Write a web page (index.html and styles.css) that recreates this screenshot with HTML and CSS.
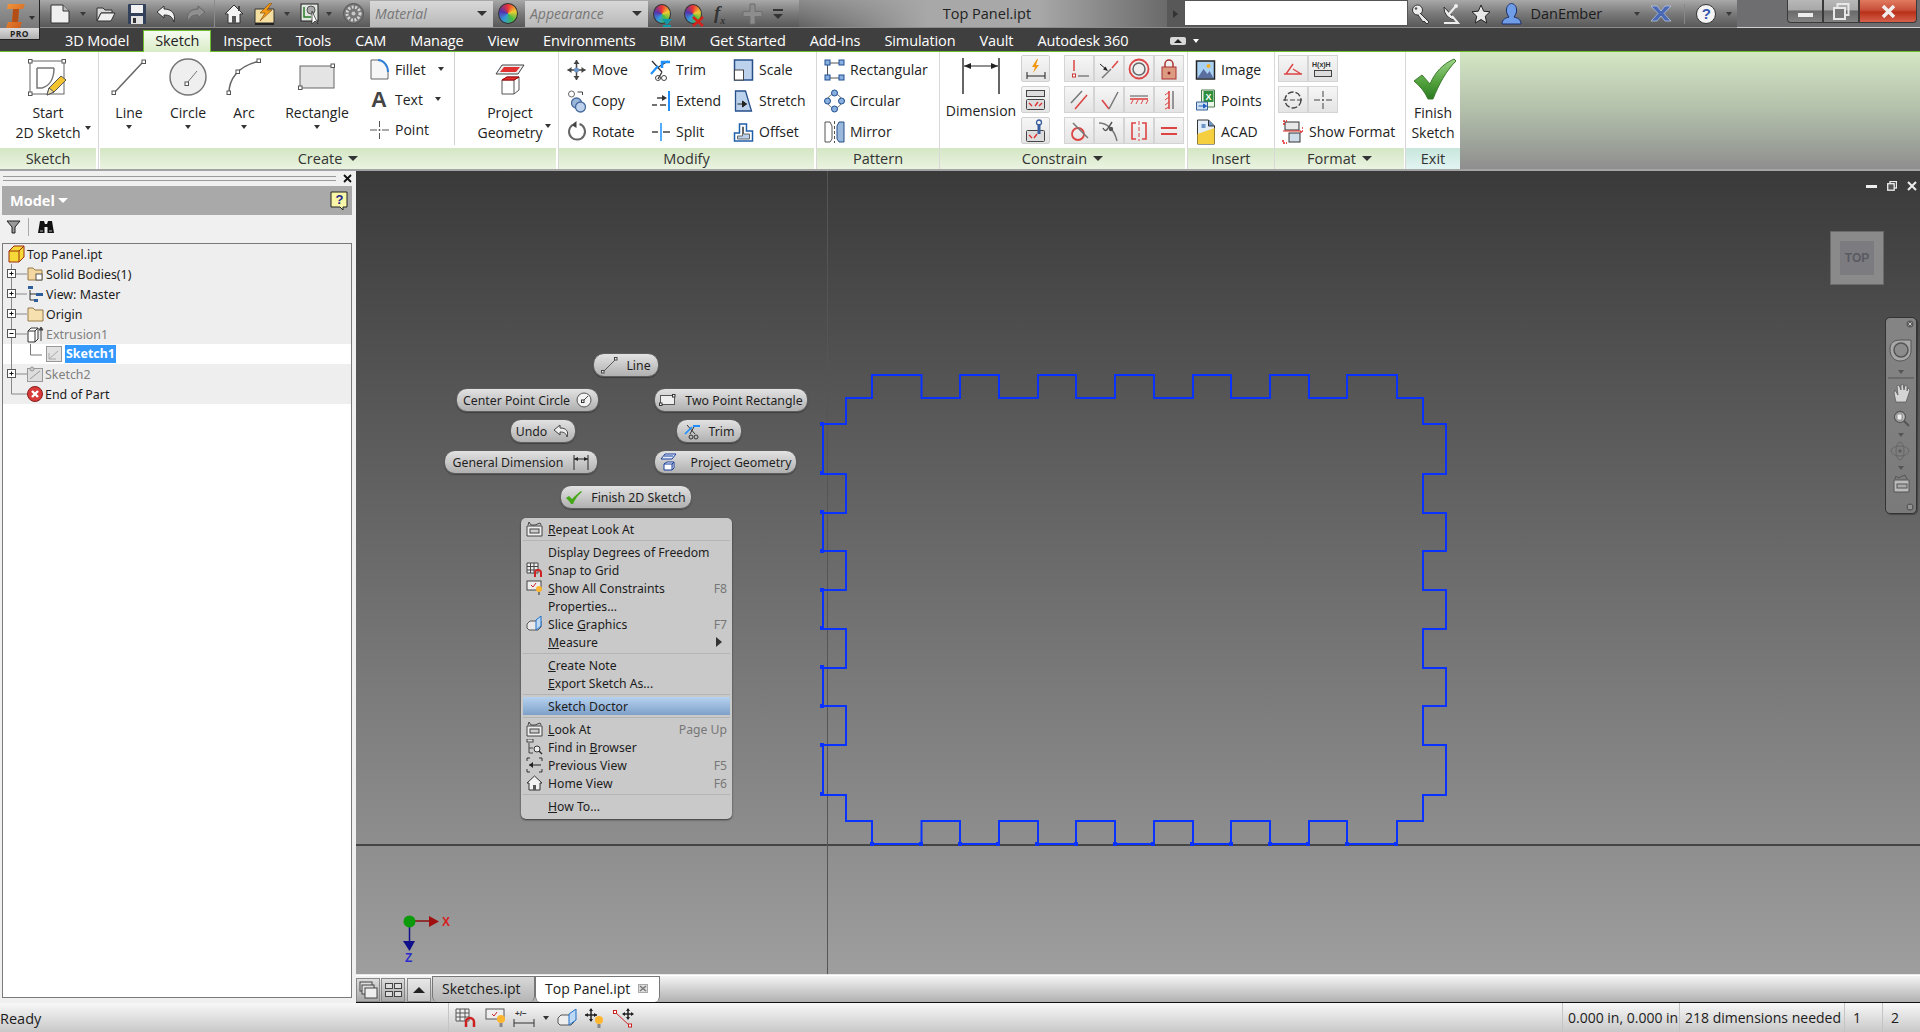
FILE: index.html
```html
<!DOCTYPE html>
<html lang="en">
<head>
<meta charset="utf-8">
<title>Top Panel.ipt</title>
<link rel="stylesheet" href="styles.css">
</head>
<body>
<div class="logo">
  <svg width="30" height="28" viewBox="0 0 30 28"><defs><linearGradient id="lg" x1="0" y1="0" x2="1" y2="1"><stop offset="0" stop-color="#f2963a"/><stop offset="1" stop-color="#c9581a"/></linearGradient></defs><path d="M4 4H21L19 9H15L14 22H18L16 28H2L4 22H8L9 9H3Z" fill="url(#lg)"/><path d="M9 9H15L14 22H8Z" fill="#b34e16"/></svg>
  <i class="caret dark logo-caret"></i>
  <div class="pro">PRO</div>
</div>
<header class="titlebar">
  <div class="qat">
    <svg width="20" height="20" viewBox="0 0 20 20"><path d="M1 1H13L19 7V19H1Z" fill="#efefef" stroke="#333"/><path d="M13 1V7H19" fill="#bbb" stroke="#333"/></svg>
    <i class="caret"></i>
    <svg width="20" height="18" viewBox="0 0 20 18"><path d="M1 3H7L9 5H16V8H5L1 16Z" fill="#d8d8d8" stroke="#333"/><path d="M5 8H19L15 16H1Z" fill="#f0f0f0" stroke="#333"/></svg>
    <svg width="20" height="22" viewBox="0 0 20 22"><rect x="1" y="1" width="18" height="20" rx="1" fill="#33405a"/><rect x="4" y="2" width="12" height="8" fill="#f2f2f2"/><rect x="4" y="13" width="12" height="8" fill="#e2e2e2"/><rect x="6" y="15" width="3" height="5" fill="#333"/></svg>
    <svg width="20" height="18" viewBox="0 0 20 18"><path d="M8 1 1 7 8 13V10C13 10 16 11 18 17 20 9 16 4 8 4Z" fill="#f2f2f2" stroke="#333"/></svg>
    <svg width="20" height="18" viewBox="0 0 20 18"><path d="M12 1 19 7 12 13V10C7 10 4 11 2 17 0 9 4 4 12 4Z" fill="#8f8f8f" stroke="#666"/></svg>
    <i class="qat-sep"></i>
    <svg width="20" height="20" viewBox="0 0 20 20"><path d="M1 10 10 1 19 10H16V19H4V10Z" fill="#f4f4f4" stroke="#333"/><rect x="8" y="12" width="4" height="7" fill="#555"/><rect x="14" y="2" width="2" height="5" fill="#444"/></svg>
    <svg width="21" height="22" viewBox="0 0 21 22"><path d="M1 6H20V20H1Z" fill="#f4dfa0" stroke="#333"/><path d="M1 20H20V22H1Z" fill="#222"/><path d="M16 0 6 10H11L6 18 18 7H13L18 0Z" fill="#f39a16" stroke="#7a420a" stroke-width=".6"/></svg>
    <i class="caret"></i>
    <svg width="21" height="22" viewBox="0 0 21 22"><rect x="1" y="1" width="17" height="17" fill="#dfe6df" stroke="#222"/><path d="M4 4V14H11" fill="none" stroke="#2c7c2c" stroke-width="1.500"/><circle cx="11" cy="7" r="4" fill="#aaa" stroke="#555"/><path d="M12 8V21L15 18L18 21Z" fill="#fff" stroke="#222" stroke-width=".7"/></svg>
    <i class="caret"></i>
    <svg width="21" height="21" viewBox="0 0 21 21"><circle cx="10.500" cy="10.500" r="10" fill="#777" stroke="#555"/><circle cx="10.500" cy="10.500" r="6.500" fill="none" stroke="#d4d4d4" stroke-width="3" stroke-dasharray="2 1.500"/><circle cx="10.500" cy="10.500" r="2" fill="#c8c8c8"/></svg>
    <div class="combo"><span>Material</span><i class="caret dark wide"></i></div>
    <i class="ball"></i>
    <div class="combo"><span>Appearance</span><i class="caret dark wide"></i></div>
    <div class="ball small"><svg width="12" height="9" viewBox="0 0 12 9"><path d="M1 1H11L6 7Z" fill="#19a"/><rect x="2" y="7" width="8" height="2" fill="#19a"/></svg></div>
    <div class="ball small"><svg width="12" height="11" viewBox="0 0 12 11"><path d="M1 1 11 10M11 1 1 10" stroke="#d8201a" stroke-width="2.500"/></svg></div>
    <span class="fx">f<sub>x</sub></span>
    <svg width="21" height="22" viewBox="0 0 21 22"><path d="M8 1H13V8.500H20V13.500H13V21H8V13.500H1V8.500H8Z" fill="#8d8d8d" stroke="#6f6f6f"/></svg>
    <svg width="10" height="12" viewBox="0 0 10 12"><rect width="10" height="2" y="1" fill="#333"/><path d="M0 6H10L5 11Z" fill="#333"/></svg>
  </div>
  <div class="doc-title">Top Panel.ipt</div>
  <div class="title-arrow"><i class="caret right"></i></div>
  <div class="search"></div>
  <div class="tools">
    <svg width="20" height="22" viewBox="0 0 20 22"><circle cx="6.500" cy="7" r="5" fill="#eee" stroke="#333"/><path d="M9 10 18 19 16 21 13 18 12 19 7 12" fill="#e8e8e8" stroke="#333"/><circle cx="5" cy="5.500" r="1.300" fill="#555"/></svg>
    <svg width="20" height="22" viewBox="0 0 20 22"><path d="M3 4A12 12 0 0 0 15 17Z" fill="#eee" stroke="#333"/><path d="M8 11 15 3M3 20H17L11 13" stroke="#eee" stroke-width="2" fill="none"/><circle cx="15" cy="3" r="2" fill="#eee"/></svg>
    <svg width="20" height="20" viewBox="0 0 20 20"><path d="M10 1 12.700 7.200 19 7.800 14.300 12.200 15.700 19 10 15.500 4.300 19 5.700 12.200 1 7.800 7.300 7.200Z" fill="#e8e8e8" stroke="#222"/></svg>
    <svg width="21" height="22" viewBox="0 0 21 22"><path d="M1 21C1 16 5 15 8 14 6 11 5 9 5.500 6 6 2 9 .5 10.500 .5 12 .5 15 2 15.500 6 16 9 15 11 13 14 16 15 20 16 20 21Z" fill="#6f9de8" stroke="#1c2f6a"/></svg>
    <span class="user">DanEmber</span>
    <i class="caret"></i>
    <svg width="20" height="17" viewBox="0 0 20 17"><path d="M0 1H6L10 6 14 1H20L13 8.500 20 16H14L10 11 6 16H0L7 8.500Z" fill="#4a69b5" stroke="#c2cde8" stroke-width=".7"/></svg>
    <i class="tool-sep"></i>
    <div class="help">?</div>
    <i class="caret"></i>
  </div>
  <div class="winctl">
    <div class="wb"><i class="wmin"></i></div>
    <div class="wb"><svg width="17" height="17" viewBox="0 0 17 17"><rect x="4.500" y="1" width="11" height="11" fill="none" stroke="#e8e8e8" stroke-width="2"/><rect x="1" y="5" width="11" height="11" fill="#777" stroke="#e8e8e8" stroke-width="2"/></svg></div>
    <div class="wb wclose"><svg width="15" height="13" viewBox="0 0 15 13"><path d="M2 1 13 12M13 1 2 12" stroke="#f1eded" stroke-width="3.500"/></svg></div>
  </div>
</header>
<nav class="tabs">
  <span>3D Model</span><span class="on">Sketch</span><span>Inspect</span><span>Tools</span><span>CAM</span><span>Manage</span><span>View</span><span>Environments</span><span>BIM</span><span>Get Started</span><span>Add-Ins</span><span>Simulation</span><span>Vault</span><span>Autodesk 360</span>
  <div class="tab-collapse"><i class="pillbtn"><i class="caret up"></i></i><i class="caret white"></i></div>
</nav>
<section class="ribbon">
  <div class="panel p-sketch">
    <div class="pbody">
      <div class="big w-96">
        <svg width="40" height="40" viewBox="0 0 40 40"><rect x="2" y="3" width="34" height="33" fill="none" stroke="#666"/><g fill="#fff" stroke="#555"><rect x=".5" y="1.500" width="3.500" height="3.500"/><rect x="34" y="1.500" width="3.500" height="3.500"/><rect x=".5" y="34" width="3.500" height="3.500"/></g><path d="M9 10H26M9 10V30H14C22 28 26 20 26 10" fill="none" stroke="#777" stroke-width="1.500"/><path d="M19 37 21 30 33 18 38 22 26 34Z" fill="#f4c430" stroke="#555"/><path d="M19 37 21 30 26 34Z" fill="#f4e4b0" stroke="#555"/></svg>
        <span class="lbl lbl-two tight">Start<br>2D Sketch</span>
        <i class="caret dark cr-sketch"></i>
      </div>
    </div>
    <div class="ptitle">Sketch</div>
  </div>
  <div class="panel p-create">
    <div class="pbody">
      <div class="big w-52 ml-3">
        <svg width="36" height="38" viewBox="0 0 36 38"><path d="M3 35 32 4" stroke="#666" stroke-width="1.500"/><g fill="#fff" stroke="#555"><rect x="1" y="33" width="3.500" height="3.500"/><rect x="31" y="2" width="3.500" height="3.500"/></g></svg>
        <span class="lbl">Line</span><i class="caret dark"></i>
      </div>
      <div class="big w-66">
        <svg width="40" height="38" viewBox="0 0 40 38"><circle cx="20" cy="19" r="18" fill="#efefef" stroke="#777" stroke-width="1.500"/><path d="M19 25 29 13" stroke="#777"/><rect x="17" y="24" width="3.500" height="3.500" fill="#fff" stroke="#555"/></svg>
        <span class="lbl">Circle</span><i class="caret dark"></i>
      </div>
      <div class="big w-46">
        <svg width="38" height="38" viewBox="0 0 38 38"><path d="M4 35C4 22 12 8 35 3" fill="none" stroke="#666" stroke-width="1.500"/><g fill="#fff" stroke="#555"><rect x="2" y="33" width="3.500" height="3.500"/><rect x="32" y="1" width="3.500" height="3.500"/><rect x="11" y="12" width="3.500" height="3.500"/></g></svg>
        <span class="lbl">Arc</span><i class="caret dark"></i>
      </div>
      <div class="big w-100">
        <svg class="ic-rect" width="38" height="28" viewBox="0 0 38 28"><rect x="2" y="3" width="34" height="22" fill="#e4e4e4" stroke="#666"/><g fill="#fff" stroke="#555"><rect x="33" y="1" width="3.500" height="3.500"/><rect x=".5" y="23" width="3.500" height="3.500"/></g></svg>
        <span class="lbl">Rectangle</span><i class="caret dark"></i>
      </div>
      <div class="smcol w-88">
        <div class="sm"><svg width="21" height="22" viewBox="0 0 21 22"><path d="M2 2H9C14 2 19 7 19 14V21H2Z" fill="#f6f6f6" stroke="#666"/><path d="M9 2C14 2 19 7 19 14" fill="none" stroke="#2f7fd6" stroke-width="2"/></svg><span>Fillet</span><i class="caret dark sm-caret"></i></div>
        <div class="sm"><svg width="21" height="27" viewBox="0 0 21 27"><text x="2" y="21" class="bigA">A</text></svg><span>Text</span><i class="caret dark sm-caret"></i></div>
        <div class="sm"><svg width="21" height="22" viewBox="0 0 21 22"><path d="M1 11H8M13 11H20M10.500 2V8M10.500 14V20" stroke="#555"/><circle cx="10.500" cy="11" r="1" fill="#555"/></svg><span>Point</span></div>
      </div>
      <div class="big w-100 proj">
        <svg width="30" height="32" viewBox="0 0 30 32"><path d="M7 1H29L23 10H1Z" fill="#eee" stroke="#444"/><path d="M9 3H25L21 8H5Z" fill="#e03030"/><path d="M7 16H19L24 13H12ZM7 16V30H19V16M19 30 24 26V13" fill="#fff" stroke="#555"/><path d="M7 16H19L24 13H12Z" fill="#e03030" stroke="#a00"/></svg>
        <span class="lbl lbl-two">Project<br>Geometry</span>
        <i class="caret dark cr-proj"></i>
      </div>
    </div>
    <div class="ptitle">Create<i class="caret dark wide"></i></div>
  </div>
  <div class="panel p-modify">
    <div class="pbody padtop">
      <div class="smcol c-84">
        <div class="sm"><svg width="20" height="22" viewBox="0 0 20 22"><path d="M10 1V21M1 11H19" stroke="#444" stroke-width="1.500"/><path d="M10 1 7 5H13ZM10 21 7 17H13ZM1 11 5 8V14ZM19 11 15 8V14Z" fill="#444"/><circle cx="10" cy="11" r="2.500" fill="#6d95c8"/></svg><span>Move</span></div>
        <div class="sm"><svg width="20" height="24" viewBox="0 0 20 24"><circle cx="5" cy="5" r="3" fill="#fff" stroke="#666"/><circle cx="10" cy="14" r="5" fill="#9ab7dc" stroke="#466a9c" stroke-width="1.300"/><circle cx="14" cy="18" r="5" fill="#bcd2ec" stroke="#466a9c" stroke-width="1.300"/><path d="M11 3H16V6" fill="none" stroke="#444"/></svg><span>Copy</span></div>
        <div class="sm"><svg width="20" height="24" viewBox="0 0 20 24"><path d="M6 5A8 8 0 1 0 13 4" fill="none" stroke="#666" stroke-width="2"/><path d="M10 1V8L5 5Z" fill="#444"/></svg><span>Rotate</span></div>
      </div>
      <div class="smcol c-83">
        <div class="sm"><svg width="21" height="24" viewBox="0 0 21 24"><path d="M2 3 12 14M12 14 8 21M7 10 18 3" stroke="#333" stroke-width="1.300" fill="none"/><path d="M12 3V10M11 4H20" stroke="#1e90ff" stroke-width="2.500"/><path d="M1 16 8 8" stroke="#1e90ff" stroke-width="2"/><circle cx="8" cy="20" r="2.500" fill="none" stroke="#444"/><circle cx="14" cy="20" r="2.500" fill="none" stroke="#444"/></svg><span>Trim</span></div>
        <div class="sm"><svg width="21" height="22" viewBox="0 0 21 22"><path d="M2 15H7M10 15H16M7 8H14" stroke="#444" stroke-width="1.500"/><path d="M17 8 12 5V11Z" fill="#333"/><path d="M19 1V21" stroke="#1e90ff" stroke-width="2"/></svg><span>Extend</span></div>
        <div class="sm"><svg width="21" height="22" viewBox="0 0 21 22"><path d="M2 11H8M13 11H20" stroke="#444" stroke-width="1.500"/><path d="M11 2V20" stroke="#1e90ff" stroke-width="1.500"/></svg><span>Split</span></div>
      </div>
      <div class="smcol">
        <div class="sm"><svg width="20" height="24" viewBox="0 0 20 24"><rect x="1" y="2" width="18" height="20" fill="#bcd2ec" stroke="#274f8a" stroke-width="1.500"/><rect x="1" y="12" width="9" height="10" fill="#fff" stroke="#444"/></svg><span>Scale</span></div>
        <div class="sm"><svg width="20" height="24" viewBox="0 0 20 24"><path d="M2 2H12L18 22H2Z" fill="#bcd2ec" stroke="#274f8a" stroke-width="1.300"/><path d="M4 15H13M13 15 9 12V18Z" stroke="#222" fill="#222"/></svg><span>Stretch</span></div>
        <div class="sm"><svg width="20" height="22" viewBox="0 0 20 22"><path d="M1 20V12H6V3H13V10H19V20Z" fill="#fff" stroke="#1f5fa8" stroke-width="1.500"/><path d="M4 18V15H9V6H10V13H16V18Z" fill="#bcd2ec" stroke="#666"/></svg><span>Offset</span></div>
      </div>
    </div>
    <div class="ptitle">Modify</div>
  </div>
  <div class="panel p-pattern">
    <div class="pbody padtop">
      <div class="smcol">
        <div class="sm"><svg width="21" height="22" viewBox="0 0 21 22"><path d="M5 4H17M3.500 6V17M5 19H17" stroke="#555"/><g fill="#8ab0e0" stroke="#1f4f90"><rect x="1" y="1" width="5" height="5"/><rect x="15" y="1" width="5" height="5"/><rect x="1" y="16" width="5" height="5"/><rect x="15" y="16" width="5" height="5"/></g></svg><span>Rectangular</span></div>
        <div class="sm"><svg width="21" height="24" viewBox="0 0 21 24"><circle cx="10.500" cy="12" r="7" fill="none" stroke="#777"/><g fill="#8ab0e0" stroke="#1f4f90"><circle cx="10.500" cy="4" r="3"/><circle cx="3.500" cy="12" r="3"/><circle cx="17.500" cy="12" r="3"/><circle cx="10.500" cy="20" r="3"/></g></svg><span>Circular</span></div>
        <div class="sm"><svg width="21" height="24" viewBox="0 0 21 24"><path d="M1 2H6L8 6V19L6 22H1Z" fill="#fff" stroke="#555"/><path d="M20 2H15L13 6V19L15 22H20Z" fill="#9ab7dc" stroke="#274f8a"/><path d="M10.500 1V23" stroke="#555" stroke-dasharray="3 2"/></svg><span>Mirror</span></div>
      </div>
    </div>
    <div class="ptitle">Pattern</div>
  </div>
  <div class="panel p-constrain">
    <div class="pbody cpad">
      <div class="big dim">
        <svg width="40" height="36" viewBox="0 0 40 36"><path d="M2 0V36M38 0V36" stroke="#666" stroke-width="2"/><path d="M3 8H37" stroke="#222"/><path d="M3 8 10 5V11ZM37 8 30 5V11Z" fill="#222"/></svg>
        <span class="lbl">Dimension</span>
      </div>
      <div class="cbtn-col">
        <div class="cbtn"><svg width="20" height="22" viewBox="0 0 20 22"><path d="M11 1 6 9H9L7 15 13 7H10L12 1Z" fill="#f0960f"/><path d="M1 14V21M19 14V21M1 18H19" stroke="#222"/></svg></div>
        <div class="cbtn"><svg width="21" height="22" viewBox="0 0 21 22"><rect x="1.500" y="1.500" width="18" height="6" fill="#ddd" stroke="#444"/><rect x="1.500" y="10.500" width="18" height="10" rx="1" fill="#ddd" stroke="#444"/><path d="M4 14 7 17M10 17 13 13M14 17 17 14" stroke="#d33" stroke-width="1.400"/></svg></div>
        <div class="cbtn"><svg width="21" height="24" viewBox="0 0 21 24"><rect x="1.500" y="11.500" width="18" height="11" rx="1" fill="#ddd" stroke="#444"/><path d="M14 5V15" stroke="#3a5f9e" stroke-width="3"/><circle cx="14" cy="3.500" r="2.500" fill="none" stroke="#3a5f9e" stroke-width="1.300"/><path d="M4 16 7 19M9 19 12 15" stroke="#d33" stroke-width="1.400"/></svg></div>
      </div>
      <div class="cgrid">
        <div><svg width="22" height="22" viewBox="0 0 22 22"><path d="M6 2V13" stroke="#d44" stroke-width="1.500"/><rect x="4.500" y="16" width="3" height="3" fill="#fff" stroke="#c33"/><path d="M10 18H21" stroke="#777" stroke-width="1.400"/></svg></div>
        <div><svg width="22" height="22" viewBox="0 0 22 22"><path d="M4 20 13 11" stroke="#777" stroke-width="1.400"/><path d="M14 10 20 3" stroke="#d44" stroke-width="1.500"/><path d="M2 6 9 12" stroke="#222"/><path d="M10 13 5 11.500 7.500 8.500Z" fill="#222"/></svg></div>
        <div><svg width="22" height="22" viewBox="0 0 22 22"><circle cx="11" cy="11" r="9.500" fill="none" stroke="#d44" stroke-width="1.800"/><circle cx="11" cy="11" r="6" fill="#eee" stroke="#666" stroke-width="1.500"/></svg></div>
        <div><svg width="22" height="22" viewBox="0 0 22 22"><rect x="4" y="9" width="14" height="12" fill="#dc9a80" stroke="#a33"/><path d="M7 9V6A4 4 0 0 1 15 6V9" fill="none" stroke="#a33" stroke-width="1.500"/><circle cx="11" cy="15" r="1.500" fill="#822"/></svg></div>
        <div><svg width="22" height="22" viewBox="0 0 22 22"><path d="M3 14 14 2" stroke="#777" stroke-width="1.500"/><path d="M7 20 19 6" stroke="#d44" stroke-width="1.600"/></svg></div>
        <div><svg width="22" height="22" viewBox="0 0 22 22"><path d="M4 11 11 20" stroke="#d44" stroke-width="1.600"/><path d="M11 20 20 3" stroke="#777" stroke-width="1.500"/></svg></div>
        <div><svg width="22" height="22" viewBox="0 0 22 22"><path d="M2 7H20" stroke="#777" stroke-width="1.300"/><path d="M2 10H20" stroke="#d44" stroke-width="1.600"/><path d="M5 11 3 15M10 11 8 15M15 11 13 15M20 11 18 15" stroke="#d44"/></svg></div>
        <div><svg width="22" height="22" viewBox="0 0 22 22"><path d="M15 2V20" stroke="#777" stroke-width="1.500"/><path d="M11 2V20" stroke="#d44" stroke-width="1.600"/><path d="M7 6 11 3M7 11 11 8M7 16 11 13M7 20 11 18" stroke="#d44"/></svg></div>
        <div><svg width="22" height="22" viewBox="0 0 22 22"><circle cx="10" cy="14" r="6" fill="none" stroke="#d44" stroke-width="1.800"/><path d="M5 3 20 18" stroke="#777" stroke-width="1.500"/></svg></div>
        <div><svg width="22" height="22" viewBox="0 0 22 22"><path d="M1 3C8 3 16 8 19 21" stroke="#777" stroke-width="1.400" fill="none"/><path d="M14 2C10 8 8 14 5 8" stroke="#555" stroke-width="1.400" fill="none"/><circle cx="13" cy="9" r="2.200" fill="#555"/></svg></div>
        <div><svg width="22" height="22" viewBox="0 0 22 22"><path d="M8 3H4V19H8M14 3H18V19H14" fill="none" stroke="#d44" stroke-width="1.600"/><path d="M11 1V21" stroke="#d44" stroke-dasharray="4 2"/></svg></div>
        <div><svg width="22" height="22" viewBox="0 0 22 22"><path d="M3 8H19M3 14H19" stroke="#d44" stroke-width="1.800"/></svg></div>
      </div>
    </div>
    <div class="ptitle">Constrain<i class="caret dark wide"></i></div>
  </div>
  <div class="panel p-insert">
    <div class="pbody padtop">
      <div class="smcol">
        <div class="sm"><svg width="20" height="22" viewBox="0 0 20 22"><rect x="1" y="2" width="18" height="18" fill="#a9d2f2" stroke="#222" stroke-width="1.500"/><path d="M2 19 8 10 12 15 14 12 18 19Z" fill="#5a6ea0"/><circle cx="13" cy="7" r="2" fill="#f0b030"/></svg><span>Image</span></div>
        <div class="sm"><svg width="20" height="24" viewBox="0 0 20 24"><path d="M6 1H19V18H6Z" fill="#eef6ea" stroke="#4a7a4a"/><rect x="8" y="2" width="10" height="11" fill="#2f8f3f"/><text x="10" y="11" class="xl">X</text><path d="M1 13H12V21H1Z" fill="#cfe0f2" stroke="#345f98"/><path d="M3 17H11M11 17 8 15V19Z" stroke="#2060c0" fill="#2060c0"/></svg><span>Points</span></div>
        <div class="sm"><svg width="20" height="26" viewBox="0 0 20 26"><path d="M2 1H13L19 7V25H2Z" fill="#e3eef8" stroke="#333"/><path d="M2 15 19 9V25H2Z" fill="#f5cf3f"/><path d="M13 1V7H19" fill="#6d95c8" stroke="#333"/><rect x="6" y="5" width="4" height="4" fill="#6d95c8"/></svg><span>ACAD</span></div>
      </div>
    </div>
    <div class="ptitle">Insert</div>
  </div>
  <div class="panel p-format">
    <div class="pbody fmt">
      <div class="frow">
        <div><svg width="22" height="18" viewBox="0 0 22 18"><path d="M2 14H20M4 14 11 4 M11 9 19 14" stroke="#d44" stroke-width="1.400" fill="none"/></svg></div>
        <div><svg width="24" height="22" viewBox="0 0 24 22"><text x="1" y="9" class="hxh">H(x)H</text><rect x="3.500" y="12.500" width="17" height="6" fill="#ddd" stroke="#444"/></svg></div>
      </div>
      <div class="frow">
        <div><svg width="22" height="20" viewBox="0 0 22 20"><circle cx="11" cy="10" r="8" fill="none" stroke="#444" stroke-width="1.400" stroke-dasharray="6 2"/><path d="M1 10H21" stroke="#444" stroke-dasharray="5 2"/></svg></div>
        <div><svg width="20" height="20" viewBox="0 0 20 20"><path d="M1 10H7M13 10H19M10 1V7M10 13V19" stroke="#444"/><circle cx="10" cy="10" r="1" fill="#444"/></svg></div>
      </div>
      <div class="sm fsm"><svg width="21" height="24" viewBox="0 0 21 24"><rect x="3" y="2" width="14" height="8" fill="#e8e8e8" stroke="#333"/><rect x="7" y="13" width="11" height="9" fill="#cfdcea" stroke="#333"/><path d="M2 5V1H5M18 12H21V7M1 20V23H5" fill="none" stroke="#d22" stroke-width="1.500" stroke-dasharray="2 1"/><path d="M1 11H19" stroke="#d22"/></svg><span>Show Format</span></div>
    </div>
    <div class="ptitle">Format<i class="caret dark wide"></i></div>
  </div>
  <div class="panel p-exit">
    <div class="pbody">
      <div class="big w-full">
        <svg class="ic-check" width="44" height="42" viewBox="0 0 44 42"><defs><linearGradient id="chk" x1="0" y1="0" x2="0" y2="1"><stop offset="0" stop-color="#9fd58a"/><stop offset=".6" stop-color="#4f9f3a"/><stop offset="1" stop-color="#2c7a22"/></linearGradient></defs><path d="M1 23 9 17 17 26C22 14 30 6 41 1L43 3C33 13 26 26 20 41H15C12 34 7 28 1 23Z" fill="url(#chk)" stroke="#3d7a2e"/></svg>
        <span class="lbl lbl-two tighter">Finish<br>Sketch</span>
      </div>
    </div>
    <div class="ptitle pt-exit">Exit</div>
  </div>
  <div class="ribbon-fill"></div>
</section>
<main class="main">
  <aside class="browser">
    <div class="grip"><i></i><svg width="9" height="9" viewBox="0 0 9 9"><path d="M1 1 8 8M8 1 1 8" stroke="#111" stroke-width="1.800"/></svg></div>
    <div class="bhead"><span>Model</span><i class="caret white wide"></i>
      <svg class="qhelp" width="18" height="20" viewBox="0 0 18 20"><path d="M1 1H17V16H13V19L10 16H1Z" fill="#faf6a8" stroke="#222"/><text x="5.500" y="13" class="q">?</text></svg>
    </div>
    <div class="btools">
      <svg width="15" height="14" viewBox="0 0 15 14"><path d="M1 1H14L9 7V13H6V7Z" fill="#9a9a9a" stroke="#222"/></svg>
      <i></i>
      <svg width="16" height="14" viewBox="0 0 16 14"><path d="M2 1H6L7 4H9L10 1H14L16 13H9.500V7H6.500V13H0Z" fill="#111"/><rect x="2" y="10" width="3" height="2" fill="#666"/><rect x="11" y="10" width="3" height="2" fill="#666"/></svg>
    </div>
    <div class="tree">
      <div class="row"><svg class="tic root" width="17" height="18" viewBox="0 0 17 18"><path d="M1 6 6 1H16V12L11 17H1Z" fill="#f6d938" stroke="#9a2a0a"/><path d="M1 6H11V17M11 6 16 1" fill="none" stroke="#9a2a0a"/></svg><span>Top Panel.ipt</span></div>
      <div class="row"><svg width="24" height="20" viewBox="0 0 24 20"><path d="M8.500 0V20M13 10H24" stroke="#888"/><rect x="4.500" y="5.500" width="8" height="8" fill="#fff" stroke="#555"/><path d="M6.500 9.500H10.500M8.500 7.500V11.500" stroke="#111"/></svg><svg class="tic" width="17" height="18" viewBox="0 0 17 18"><path d="M1 3H6L8 5H15V15H1Z" fill="#f4d7a0" stroke="#947a48"/><rect x="9" y="9" width="6" height="6" fill="#fff" stroke="#555"/></svg><span>Solid Bodies(1)</span></div>
      <div class="row"><svg width="24" height="20" viewBox="0 0 24 20"><path d="M8.500 0V20M13 10H24" stroke="#888"/><rect x="4.500" y="5.500" width="8" height="8" fill="#fff" stroke="#555"/><path d="M6.500 9.500H10.500M8.500 7.500V11.500" stroke="#111"/></svg><svg class="tic" width="17" height="18" viewBox="0 0 17 18"><path d="M3 5V15H9M3 9H9" fill="none" stroke="#333"/><g fill="#2e5e9a"><rect x="1" y="1" width="5" height="3"/><rect x="9" y="8" width="7" height="3"/><rect x="7" y="14" width="4" height="3"/></g></svg><span>View: Master</span></div>
      <div class="row"><svg width="24" height="20" viewBox="0 0 24 20"><path d="M8.500 0V20M13 10H24" stroke="#888"/><rect x="4.500" y="5.500" width="8" height="8" fill="#fff" stroke="#555"/><path d="M6.500 9.500H10.500M8.500 7.500V11.500" stroke="#111"/></svg><svg class="tic" width="17" height="18" viewBox="0 0 17 18"><path d="M1 3H6L8 5H16V16H1Z" fill="#f7e0b0" stroke="#947a48"/></svg><span>Origin</span></div>
      <div class="row dim-text"><svg width="24" height="20" viewBox="0 0 24 20"><path d="M8.500 0V20M13 10H24" stroke="#888"/><rect x="4.500" y="5.500" width="8" height="8" fill="#fff" stroke="#555"/><path d="M6.500 9.500H10.500" stroke="#111"/></svg><svg class="tic" width="17" height="18" viewBox="0 0 17 18"><path d="M1 6 4 3H11V14L8 17H1ZM1 6H8V17M8 6 11 3" fill="#fff" stroke="#333"/><path d="M14 16V3M14 2 12 5H16Z" stroke="#444" fill="#444"/></svg><span>Extrusion1</span></div>
      <div class="row child"><svg width="43" height="20" viewBox="0 0 43 20"><path d="M8.500 0V20" stroke="#888"/><path d="M27.500 0V11H39" fill="none" stroke="#777"/></svg><svg class="tic" width="16" height="16" viewBox="0 0 16 16"><rect x=".5" y=".5" width="15" height="15" fill="#e2e2e2" stroke="#999"/><path d="M3 13 12 5M3 13V7M3 13H10" stroke="#aaa" fill="none"/></svg><b class="sel">Sketch1</b></div>
      <div class="row dim-text"><svg width="24" height="20" viewBox="0 0 24 20"><path d="M8.500 0V20M13 10H24" stroke="#888"/><rect x="4.500" y="5.500" width="8" height="8" fill="#fff" stroke="#555"/><path d="M6.500 9.500H10.500M8.500 7.500V11.500" stroke="#111"/></svg><svg class="tic" width="16" height="16" viewBox="0 0 16 16"><rect x=".5" y="2.500" width="15" height="13" fill="#ddd" stroke="#999"/><circle cx="5" cy="3" r="2" fill="#ccc" stroke="#999"/><path d="M3 13 13 5" stroke="#999"/></svg><span>Sketch2</span></div>
      <div class="row"><svg width="24" height="20" viewBox="0 0 24 20"><path d="M8.500 0V10H24" fill="none" stroke="#888"/></svg><svg class="tic" width="16" height="16" viewBox="0 0 16 16"><circle cx="8" cy="8" r="7.500" fill="#d83a3a" stroke="#8a1c1c"/><path d="M5 5 11 11M11 5 5 11" stroke="#fff" stroke-width="2.400"/></svg><span>End of Part</span></div>
    </div>
  </aside>
  <div class="workspace">
    <div class="viewport">
      <svg class="scene" width="1564" height="804" viewBox="356 171 1564 804">
        <path d="M356 845H1920" stroke="#444" stroke-width="2"/>
        <path d="M827.500 171V975" stroke="#555"/>
        <path d="M872 375H921.500V398H960V375H999V398H1038V375H1076V398H1115V375H1154V398H1193V375H1231V398H1270V375H1309V398H1347V375H1397V398H1423V424H1446V474H1423V513H1446V551H1423V590H1446V629H1423V668H1446V706H1423V745H1446V795H1423V821H1397V844H1347V821H1309V844H1270V821H1231V844H1193V821H1154V844H1115V821H1076V844H1038V821H999V844H960V821H921.500V844H872V821H846V795H823V745H846V706H823V668H846V629H823V590H846V551H823V513H846V474H823V424H846V398H872Z" fill="none" stroke="#0a32ff" stroke-width="2"/>
        <g fill="#0a32ff">
          <rect x="820" y="422" width="4" height="4"/><rect x="820" y="471" width="4" height="4"/><rect x="820" y="510" width="4" height="4"/><rect x="820" y="549" width="4" height="4"/><rect x="820" y="588" width="4" height="4"/><rect x="820" y="626" width="4" height="4"/><rect x="820" y="665" width="4" height="4"/><rect x="820" y="704" width="4" height="4"/><rect x="820" y="743" width="4" height="4"/><rect x="820" y="792" width="4" height="4"/>
          <rect x="870" y="842" width="4" height="4"/><rect x="919" y="842" width="4" height="4"/><rect x="958" y="842" width="4" height="4"/><rect x="996" y="842" width="4" height="4"/><rect x="1035" y="842" width="4" height="4"/><rect x="1074" y="842" width="4" height="4"/><rect x="1113" y="842" width="4" height="4"/><rect x="1151" y="842" width="4" height="4"/><rect x="1190" y="842" width="4" height="4"/><rect x="1229" y="842" width="4" height="4"/><rect x="1268" y="842" width="4" height="4"/><rect x="1306" y="842" width="4" height="4"/><rect x="1345" y="842" width="4" height="4"/><rect x="1394" y="842" width="4" height="4"/>
        </g>
        <path d="M409 921H430" stroke="#8a0f0f" stroke-width="1.500"/><path d="M429 916 439 921.500 429 927Z" fill="#a01010"/>
        <path d="M409.500 921V942" stroke="#10108a" stroke-width="1.500"/><path d="M403 941 415 941 409.500 951Z" fill="#10108a"/>
        <circle cx="409.500" cy="921.500" r="6" fill="#0a9a0a"/>
        <text x="442" y="926" class="ax ax-x">X</text><text x="405" y="962" class="ax ax-z">Z</text>
      </svg>

      <div class="pill p1"><svg width="17" height="17" viewBox="0 0 17 17"><path d="M2 15 15 2" stroke="#555"/><g fill="#eee" stroke="#444"><rect x=".5" y="13.500" width="2.500" height="2.500"/><rect x="13.500" y=".5" width="2.500" height="2.500"/></g></svg><span>Line</span></div>
      <div class="pill p2"><span>Center Point Circle</span><svg width="16" height="16" viewBox="0 0 16 16"><circle cx="8" cy="8" r="7" fill="#f2f2f2" stroke="#555"/><path d="M7 9 12 4" stroke="#444"/><rect x="5.500" y="8" width="2.500" height="2.500" fill="#fff" stroke="#333"/></svg></div>
      <div class="pill p3"><svg width="17" height="12" viewBox="0 0 17 12"><rect x="1.500" y="1.500" width="14" height="9" fill="#eee" stroke="#555"/><g fill="#fff" stroke="#333"><rect x="13.500" y=".5" width="2.500" height="2.500"/><rect x=".5" y="9" width="2.500" height="2.500"/></g></svg><span>Two Point Rectangle</span></div>
      <div class="pill p4"><span>Undo</span><svg width="17" height="14" viewBox="0 0 17 14"><path d="M7 1 1 6 7 11V8C11 8 13 9 14 13 16 7 13 4 7 4Z" fill="#eee" stroke="#444"/></svg></div>
      <div class="pill p5"><svg width="17" height="17" viewBox="0 0 17 17"><path d="M3 2 11 11M11 2 6 11" stroke="#333" fill="none"/><path d="M9 3H16" stroke="#1e90ff" stroke-width="2"/><path d="M1 11 8 4" stroke="#1e90ff" stroke-width="1.700"/><circle cx="7" cy="14" r="2" fill="none" stroke="#333"/><circle cx="12" cy="14" r="2" fill="none" stroke="#333"/></svg><span>Trim</span></div>
      <div class="pill p6"><span>General Dimension</span><svg width="16" height="15" viewBox="0 0 16 15"><path d="M1 0V15M15 0V15" stroke="#444" stroke-width="1.200"/><path d="M1 4H15" stroke="#222"/><path d="M1 4 5 2V6ZM15 4 11 2V6Z" fill="#222"/></svg></div>
      <div class="pill p7"><svg width="17" height="18" viewBox="0 0 17 18"><path d="M5 1H16L12 6H1Z" fill="#e8eefc" stroke="#1a3f9c"/><path d="M4 3H13" stroke="#1a3f9c"/><path d="M4 11H12L14 9H7ZM4 11V17H12V11M12 17 14 15V9" fill="#fff" stroke="#1a3f9c"/></svg><span>Project Geometry</span></div>
      <div class="pill p8"><svg width="16" height="13" viewBox="0 0 16 13"><path d="M0 7 3 5 6 8C9 5 12 2 15 0L16 1C12 4 9 8 7 13H5C4 11 2 9 0 7Z" fill="#44a818"/></svg><span>Finish 2D Sketch</span></div>

      <div class="menu">
        <div class="mi"><svg width="17" height="16" viewBox="0 0 17 16"><path d="M1 5H16V15H1Z" fill="#eee" stroke="#444"/><rect x="4" y="8" width="9" height="4" fill="#ccc" stroke="#444"/><path d="M2 4 3 1 5 4H9L14 2 15 4" fill="none" stroke="#444"/></svg><span><u>R</u>epeat Look At</span></div>
        <hr>
        <div class="mi"><span>Display Degrees of Freedom</span></div>
        <div class="mi"><svg width="17" height="16" viewBox="0 0 17 16"><path d="M1 1H12V11H1ZM1 4.500H12M1 8H12M4.500 1V11M8 1V11" fill="#eee" stroke="#444"/><path d="M9 15V11A3 3 0 0 1 15 11V15" fill="none" stroke="#c22" stroke-width="2"/></svg><span>Snap to Grid</span></div>
        <div class="mi"><svg width="17" height="16" viewBox="0 0 17 16"><rect x="1" y="1" width="14" height="9" fill="#eee" stroke="#444"/><path d="M5 5 7 7 10 3" stroke="#c22" fill="none"/><circle cx="13" cy="9" r="3" fill="#fdb62f"/><rect x="12" y="12" width="2" height="3" fill="#777"/></svg><span><u>S</u>how All Constraints</span><em>F8</em></div>
        <div class="mi"><span>Properties...</span></div>
        <div class="mi"><svg width="17" height="16" viewBox="0 0 17 16"><path d="M1 8 4 5H15V11L12 14H3L1 12Z" fill="#e8e8e8" stroke="#555"/><path d="M10 4 15 0V10L10 14Z" fill="#bcd8f4" stroke="#1f6fc4"/></svg><span>Slice <u>G</u>raphics</span><em>F7</em></div>
        <div class="mi"><span><u>M</u>easure</span><i class="caret right big-right"></i></div>
        <hr>
        <div class="mi"><span><u>C</u>reate Note</span></div>
        <div class="mi"><span><u>E</u>xport Sketch As...</span></div>
        <hr>
        <div class="mi hl"><span>Sketch Doctor</span></div>
        <hr>
        <div class="mi"><svg width="17" height="16" viewBox="0 0 17 16"><path d="M1 5H16V15H1Z" fill="#eee" stroke="#444"/><rect x="4" y="8" width="9" height="4" fill="#ccc" stroke="#444"/><path d="M2 4 3 1 5 4H9L14 2 15 4" fill="none" stroke="#444"/></svg><span><u>L</u>ook At</span><em>Page Up</em></div>
        <div class="mi"><svg width="17" height="16" viewBox="0 0 17 16"><path d="M3 4V14H7M3 9H7" fill="none" stroke="#444"/><rect x="1" y="0" width="6" height="3" fill="#ddd" stroke="#444"/><circle cx="11" cy="10" r="3" fill="#eee" stroke="#333"/><path d="M13 12 16 15" stroke="#333" stroke-width="1.500"/></svg><span>Find in <u>B</u>rowser</span></div>
        <div class="mi"><svg width="17" height="16" viewBox="0 0 17 16"><path d="M1 4V1H4M13 1H16V4M16 12V15H13M4 15H1V12" fill="none" stroke="#333"/><path d="M3 8H15" stroke="#222"/><path d="M3 8 7 5V11Z" fill="#222"/></svg><span>Previous View</span><em>F5</em></div>
        <div class="mi"><svg width="17" height="16" viewBox="0 0 17 16"><path d="M1 8 8.500 1 16 8H14V15H3V8Z" fill="#f2f2f2" stroke="#333"/><rect x="7" y="10" width="3" height="5" fill="#555"/></svg><span>Home View</span><em>F6</em></div>
        <hr>
        <div class="mi"><span><u>H</u>ow To...</span></div>
      </div>

      <div class="vp-ctl">
        <i class="vmin"></i>
        <svg width="10" height="10" viewBox="0 0 10 10"><rect x="3" y=".5" width="6.500" height="6.500" fill="none" stroke="#eee" stroke-width="1.300"/><rect x=".7" y="2.700" width="6.500" height="6.500" fill="#555" stroke="#eee" stroke-width="1.300"/></svg>
        <svg width="10" height="10" viewBox="0 0 10 10"><path d="M1 1 9 9M9 1 1 9" stroke="#eee" stroke-width="2"/></svg>
      </div>
      <div class="cube"><div>TOP</div></div>
      <div class="navbar">
        <svg width="32" height="197" viewBox="0 0 32 197">
          <circle cx="25" cy="7" r="3.500" fill="#5a5a5a"/><path d="M23.500 5.500 26.500 8.500M26.500 5.500 23.500 8.500" stroke="#ccc"/>
          <g transform="translate(0 5)"><path d="M5 27C5 21 9 18 15 18H26V29C26 34 22 39 15 39 9 39 5 34 5 27Z" fill="#a8a8a8" stroke="#555"/><circle cx="16" cy="28" r="7" fill="#8c8c8c" stroke="#555" stroke-width="1.500"/></g>
          <path d="M13 53 19 53 16 57Z" fill="#555"/><path d="M3 61H29" stroke="#555"/>
          <g transform="translate(0 2)"><path d="M9 74 11 83H21L25 71 23 69 22 72 22 67 20 66 19 71 18 65 16 66 16 71 14 66 12 67 13 76 10 71Z" fill="#d4d4d4" stroke="#555" stroke-width=".7"/></g>
          <g transform="translate(0 7)"><circle cx="15" cy="93" r="5.500" fill="#bbb" stroke="#555" stroke-width="1.300"/><path d="M12 90H17V96H12Z" fill="#eee" stroke="#555" stroke-width=".6"/><path d="M19 97 24 102" stroke="#555" stroke-width="2"/></g>
          <path d="M13 116 19 116 16 120Z" fill="#555"/>
          <ellipse cx="15" cy="134" rx="9" ry="5" fill="none" stroke="#666"/><ellipse cx="15" cy="134" rx="4" ry="9" fill="none" stroke="#666"/><path d="M13 134H17M15 132V136" stroke="#555"/>
          <path d="M13 149 19 149 16 153Z" fill="#555"/>
          <path d="M9 163H24V175H9Z" fill="#bbb" stroke="#555"/><rect x="12" y="167" width="10" height="4" fill="#aaa" stroke="#555"/><path d="M10 162 11 159 13 161 20 158 22 162" fill="none" stroke="#555"/>
          <circle cx="25" cy="190" r="3.500" fill="#5a5a5a"/><path d="M23 189H27M23 191H27" stroke="#ccc"/>
        </svg>
      </div>
    </div>
    <div class="doctabs">
      <div class="dbtn"><svg width="19" height="18" viewBox="0 0 19 18"><g fill="#ddd" stroke="#444"><rect x="1" y="1" width="12" height="9"/><rect x="3" y="4" width="12" height="9"/><rect x="6" y="7" width="12" height="10" fill="#eee"/></g></svg></div>
      <div class="dbtn"><svg width="19" height="16" viewBox="0 0 19 16"><g fill="#ddd" stroke="#444"><rect x="1.500" y="1.500" width="7" height="5"/><rect x="10.500" y="1.500" width="7" height="5"/><rect x="1.500" y="9.500" width="7" height="5"/><rect x="10.500" y="9.500" width="7" height="5"/></g></svg></div>
      <div class="dbtn dbtn-up"><i class="caret up big-up"></i></div>
      <div class="dtab">Sketches.ipt</div>
      <div class="dtab active">Top Panel.ipt<svg width="10" height="9" viewBox="0 0 10 9"><rect x=".5" y=".5" width="9" height="8" fill="#ddd" stroke="#aaa"/><path d="M2 2 8 7M8 2 2 7" stroke="#777" stroke-width="1.400"/></svg></div>
    </div>
  </div>
</main>
<footer class="status">
  <span class="ready">Ready</span>
  <div class="sticons">
    <svg width="22" height="20" viewBox="0 0 22 20"><path d="M1 1H14V13H1ZM1 5H14M1 9H14M5 1V13M10 1V13" fill="#eee" stroke="#555"/><path d="M11 19V14A4 4 0 0 1 19 14V19" fill="none" stroke="#c22" stroke-width="2.500"/></svg>
    <svg width="20" height="20" viewBox="0 0 20 20"><rect x="1" y="1" width="18" height="10" fill="#eee" stroke="#555"/><path d="M7 6 9 8 12 4" stroke="#c22" fill="none"/><circle cx="16" cy="11" r="4" fill="#fdb62f"/><rect x="14.500" y="15" width="3" height="4" fill="#888"/></svg>
    <svg width="22" height="20" viewBox="0 0 22 20"><text x="2" y="8" class="pm">+/−</text><path d="M1 11V19M21 11V19M1 15H21" stroke="#333"/></svg>
    <i class="caret dark"></i>
    <svg width="20" height="18" viewBox="0 0 20 18"><path d="M1 9 4 6H17V13L14 16H3L1 14Z" fill="#eee" stroke="#555"/><path d="M12 5 19 0V11L12 16Z" fill="#bcd8f4" stroke="#1f6fc4"/></svg>
    <svg width="20" height="20" viewBox="0 0 20 20"><path d="M6 1V13M0 7H12" stroke="#222" stroke-width="1.500"/><path d="M6 0 4 3H8ZM6 14 4 11H8ZM0 7 3 5V9ZM12 7 9 5V9Z" fill="#222"/><circle cx="14" cy="12" r="4" fill="#fdb62f"/><rect x="12.500" y="16" width="3" height="4" fill="#888"/></svg>
    <svg width="22" height="20" viewBox="0 0 22 20"><path d="M2 4 17 18" stroke="#c22"/><g fill="#fff" stroke="#c22"><rect x=".5" y="2.500" width="3" height="3"/><rect x="15.500" y="16" width="3" height="3"/></g><path d="M15 1V11M10 6H20" stroke="#222" stroke-width="1.500"/><path d="M15 0 13 3H17ZM15 12 13 9H17ZM9 6 12 4V8ZM21 6 18 4V8Z" fill="#222"/></svg>
  </div>
  <div class="stcells"><span class="c1">0.000 in, 0.000 in</span><span class="c2">218 dimensions needed</span><span class="c3">1</span><span class="c3">2</span></div>
</footer>
</body>
</html>
```
FILE: styles.css
```css
* { box-sizing: border-box; }
html, body { margin: 0; padding: 0; }
body {
  width: 1920px; height: 1032px; overflow: hidden; position: relative;
  font-family: "Open Sans", "Noto Sans", sans-serif; font-size: 14px; color: #222;
  background: #f0f0f0;
}
svg { display: block; flex: none; }
i { font-style: normal; }

/* carets */
.caret { display: inline-block; width: 0; height: 0; border-left: 3.5px solid transparent; border-right: 3.5px solid transparent; border-top: 4px solid #3a3a3a; }
.caret.wide { border-left-width: 5px; border-right-width: 5px; border-top-width: 5px; }
.caret.white { border-top-color: #fff; }
.caret.dark { border-top-color: #333; }
.caret.right { border: 0; border-top: 4px solid transparent; border-bottom: 4px solid transparent; border-left: 5px solid #333; }
.caret.up { border: 0; border-left: 4px solid transparent; border-right: 4px solid transparent; border-bottom: 4px solid #222; }

/* logo */
.logo { position: absolute; left: 0; top: 0; width: 40px; height: 40px; z-index: 5; background: linear-gradient(#9a9a9a, #6a6a6a); border-right: 1px solid #222; border-bottom: 1px solid #222; }
.logo svg { margin-left: 4px; }
.logo-caret { position: absolute; left: 29px; top: 16px; }
.pro { height: 11px; background: linear-gradient(#dcdcdc, #b0b0b0); font-size: 8.5px; font-weight: 700; line-height: 11px; text-align: center; letter-spacing: .5px; color: #222; }

/* title bar */
.titlebar { display: flex; height: 28px; background: linear-gradient(#a8a8a8, #7a7a7a 50%, #585858); border-bottom: 1px solid #8c8c8c; }
.qat { width: 800px; padding-left: 50px; display: grid; align-items: center; height: 27px;
  grid-template-columns: 30px 16px 31px 29px 30px 28px 10px 30px 30px 16px 26px 17px 27px 128px 27px 128px 31px 30px 28px 31px 10px; }
.qat-sep { width: 1px; height: 27px; background: #8a8a8a; }
.combo { width: 123px; height: 26px; background: linear-gradient(#d8d8d8, #b8b8b8); display: flex; align-items: center; justify-content: space-between; padding: 0 6px 0 5px; font-style: italic; color: #777; font-size: 14px; }
.ball { width: 20px; height: 21px; border-radius: 50%; background: conic-gradient(#e33, #ec3 20%, #4b4 40%, #39d 60%, #53a 80%, #e33); border: 1px solid #333; display: flex; align-items: flex-end; justify-content: flex-end; }
.ball.small { width: 18px; height: 20px; }
.ball.small svg { margin: 0 -3px -4px 0; }
.fx { font-family: "Liberation Serif", serif; font-style: italic; font-size: 19px; font-weight: 700; color: #333; }
.fx sub { font-size: 10px; }
.doc-title { width: 368px; height: 27px; display: flex; align-items: center; justify-content: center; padding-left: 8px; font-size: 14.5px; color: #222; background: linear-gradient(90deg, transparent, #a8a8a8 35%, #a8a8a8 65%, #6a6a6a), linear-gradient(#8c8c8c, #626262); }
.title-arrow { width: 17px; height: 27px; display: flex; align-items: center; justify-content: center; background: #585858; }
.search { width: 225px; height: 26px; background: #fff; border: 1px solid #555; }
.tools { width: 329px; height: 27px; display: grid; align-items: center; padding-left: 3px;
  grid-template-columns: 30px 30px 30px 29px 104px 17px 33px 12px 30px 10px; }
.user { font-size: 14.5px; color: #1c1c1c; }
.tool-sep { width: 1px; height: 20px; background: #888; }
.help { width: 20px; height: 20px; border-radius: 50%; background: #f4f4f4; border: 1px solid #333; color: #3556b0; font: 700 15px/18px "Liberation Sans", sans-serif; text-align: center; }
.winctl { flex: 1; height: 28px; background: #6e6e70; border-bottom: 1px solid #cfcfcf; display: flex; padding: 0 3px 0 50px; }
.wb { width: 36px; height: 23px; display: flex; align-items: center; justify-content: center; background: linear-gradient(#b8b8b8, #a8a8a8 45%, #6a6a6a 50%, #828282); border: 1px solid #3a3a3a; border-top: 0; }
.wb:first-child { border-radius: 0 0 0 4px; }
.wclose { width: 58px; background: linear-gradient(#e07a60, #c8503a 45%, #b83018 55%, #d6604a); border-radius: 0 0 4px 0; }
.wmin { width: 15px; height: 4px; background: #ececec; margin-top: 7px; }

/* tabs */
.tabs { height: 24px; background: #3f3f3f; border-bottom: 1px solid #6cbe2e; display: flex; align-items: stretch; padding-left: 53px; color: #fff; font-size: 14.5px; position: relative; letter-spacing: -.1px; }
.tabs > span { padding: 1px 12px 0; line-height: 23px; }
.tabs > span:first-child { padding-right: 14px; }
.tabs > span.on { background: linear-gradient(#f6fbf0, #d8ecc6); color: #222; border: 1px solid #6cbe2e; border-bottom: 0; height: 22px; margin-top: 2px; padding: 0 11px; line-height: 20px; margin-bottom: -1px; }
.tab-collapse { display: flex; align-items: center; gap: 7px; position: absolute; left: 1170px; top: 9px; }
.pillbtn { display: flex; align-items: center; justify-content: center; width: 16px; height: 8px; background: #d8d8d8; border-radius: 2px; }

/* ribbon */
.ribbon { display: flex; height: 119px; background: #fff; border-bottom: 2px solid #a4a4a4; }
.panel { display: flex; flex-direction: column; background: #fff; }
.panel + .panel { border-left: 1px solid #d8d8d8; }
.pbody { height: 96px; display: flex; }
.padtop { padding-top: 2px; }
.cpad { padding-top: 3px; }
.ptitle { height: 21px; background: linear-gradient(#d4e6c4, #e8f2de 90%); color: #333; display: flex; align-items: center; justify-content: center; gap: 6px; font-size: 14.5px; }
.pt-exit { background: linear-gradient(#c8e6dc, #e2f4f2); }
.p-sketch { width: 98px; padding-right: 2px; }
.p-create { width: 460px; padding-right: 2px; padding-left: 1px; }
.p-modify { width: 258px; padding-right: 2px; }
.p-pattern { width: 123px; }
.p-constrain { width: 248px; padding-right: 2px; }
.p-insert { width: 87px; }
.p-format { width: 131px; padding-right: 1px; }
.p-exit { width: 55px; }
.ribbon-fill { flex: 1; background: linear-gradient(#d4e6c4, #b2bfaa 50%, #8e8e8e); }

.big { display: flex; flex-direction: column; align-items: center; position: relative; padding-top: 6px; flex: none; }
.big .lbl { line-height: 19px; margin-top: 7px; text-align: center; white-space: nowrap; }
.big .caret { margin-top: 3px; }
.ic-rect { margin: 5px 0 5px; }
.ic-check { margin-left: 3px; }
.big .lbl-two { line-height: 20px; margin-top: 9px; }
.big .tight { margin-top: 5px; }
.big .tighter { margin-top: 3px; }
.w-96 { width: 96px; }
.w-52 { width: 52px; }
.w-66 { width: 66px; }
.w-46 { width: 46px; }
.w-100 { width: 100px; }
.w-88 { width: 88px; }
.w-full { width: 100%; }
.ml-3 { margin-left: 3px; }
.proj { width: 92px; margin-left: 9px; padding-top: 12px; }
.proj .lbl-two { margin-top: 7px; }
.cr-sketch { position: absolute; left: 85px; top: 71px; }
.cr-proj { position: absolute; right: 5px; top: 69px; }

.smcol { display: flex; flex-direction: column; padding-left: 7px; flex: none; }
.p-create .smcol { padding: 2px 0 0 2px; border-right: 1px solid #d0d0d0; height: 93px; }
.sm { height: 31px; display: flex; align-items: center; gap: 5px; white-space: nowrap; }
.sm svg { width: 21px; }
.sm-caret { margin-left: 7px; }
.c-84 { width: 91px; }
.c-83 { width: 83px; padding-left: 0; }
.p-modify .smcol:last-child { padding-left: 0; }
.bigA { font: 700 22px "Liberation Sans", sans-serif; fill: #444; }
.xl { font: 700 9px "Liberation Sans", sans-serif; fill: #fff; }
.hxh { font: 700 7px "Liberation Sans", sans-serif; fill: #333; }
.q { font: 700 13px "Liberation Sans", sans-serif; fill: #22228a; }
.pm { font: 700 8px "Liberation Sans", sans-serif; fill: #333; }

.dim { width: 74px; margin-left: 4px; padding-top: 3px; }
.dim .lbl { margin-top: 7px; }
.cbtn-col { display: flex; flex-direction: column; gap: 4px; margin: 0 14px 0 3px; }
.cbtn { width: 29px; height: 27px; background: linear-gradient(#f6f6f6, #e4e4e4); border: 1px solid #d0d0d0; border-radius: 2px; display: flex; align-items: center; justify-content: center; }
.cgrid { display: grid; grid-template-columns: repeat(4, 30px); grid-auto-rows: 27px; row-gap: 4px; }
.cgrid > div { background: linear-gradient(#f6f6f6, #e4e4e4); border: 1px solid #d4d4d4; display: flex; align-items: center; justify-content: center; }

.fmt { flex-direction: column; padding: 3px 0 0 3px; }
.frow { display: grid; grid-template-columns: 30px 30px; width: 60px; height: 27px; margin-bottom: 4px; }
.frow > div { background: linear-gradient(#f6f6f6, #e4e4e4); border: 1px solid #d4d4d4; display: flex; align-items: center; justify-content: center; }
.fsm { padding-left: 4px; gap: 6px; height: 29px; }

/* main */
.main { display: flex; height: 832px; }
.browser { width: 356px; flex: none; background: #f0f0f0; display: flex; flex-direction: column; padding: 0 4px 5px 2px; }
.grip { height: 15px; display: flex; align-items: center; gap: 7px; padding-left: 1px; }
.grip i { width: 335px; height: 5px; border-top: 1px solid #9a9a9a; border-bottom: 1px solid #9a9a9a; }
.bhead { height: 29px; background: #a9a9a9; display: flex; align-items: center; padding-left: 8px; gap: 3px; color: #fff; font-weight: 700; font-size: 14.5px; position: relative; }
.qhelp { margin-left: auto; margin-right: 4px; }
.btools { height: 28px; display: flex; align-items: center; padding: 0 0 4px 4px; }
.btools i { width: 1px; height: 18px; background: #aaa; margin: 0 9px 0 7px; }
.tree { flex: 1; background: #fff; border: 1px solid #7a7a7a; font-family: "Noto Sans", sans-serif; font-size: 12.4px; }
.row { height: 20px; background: #eeeeee; display: flex; align-items: center; color: #1c1c1c; white-space: nowrap; }
.row > span { margin-left: 2px; }
.row .root { margin-left: 5px; }
.row.child { background: #fff; }
.dim-text { color: #7f7f7f; }
.sel { background: #3399ff; color: #fff; margin-left: 3px; padding: 0 1px; line-height: 18px; }

.workspace { flex: 1; display: flex; flex-direction: column; min-width: 0; }
.viewport { position: relative; height: 804px; background: linear-gradient(#3a3a3a, #9e9e9e); overflow: hidden; border-bottom: 1px solid #e8e8e8; }
.scene { position: absolute; left: 0; top: 0; }
.ax { font: 700 12px "Liberation Sans", sans-serif; }
.ax-x { fill: #d82020; }
.ax-z { fill: #2a2ad0; }

.pill { position: absolute; height: 24px; border-radius: 11px; background: linear-gradient(#e2e2e2, #b0b0b0); border: 1px solid #5e5e5e; box-shadow: 0 1px 1px rgba(0,0,0,.3); display: flex; align-items: center; justify-content: center; gap: 8px; font-family: "Noto Sans", sans-serif; font-size: 12.3px; color: #1e1e1e; white-space: nowrap; }
.p1 { left: 237px; top: 182px; width: 66px; }
.p2 { left: 100px; top: 217px; width: 143px; gap: 6px; }
.p3 { left: 298px; top: 217px; width: 154px; gap: 9px; }
.p4 { left: 154px; top: 248px; width: 66px; gap: 6px; }
.p5 { left: 320px; top: 248px; width: 66px; }
.p6 { left: 88px; top: 279px; width: 154px; gap: 10px; }
.p7 { left: 298px; top: 279px; width: 143px; gap: 14px; }
.p8 { left: 204px; top: 314px; width: 132px; gap: 9px; }

.menu { position: absolute; left: 165px; top: 347px; width: 211px; height: 301px; background: #c9c9c9; border-radius: 5px; box-shadow: 0 1px 2px rgba(0,0,0,.6); padding: 2px 2px; font-family: "Noto Sans", sans-serif; font-size: 12.2px; color: #1c1c1c; }
.mi { height: 18px; display: flex; align-items: center; position: relative; padding-left: 25px; white-space: nowrap; }
.mi svg { position: absolute; left: 3px; top: 1px; }
.mi em { margin-left: auto; margin-right: 3px; font-style: normal; color: #777; }
.mi .caret { margin-left: auto; margin-right: 8px; }
.mi .big-right { border-top-width: 5px; border-bottom-width: 5px; border-left-width: 6px; }
.mi.hl { background: linear-gradient(#b6d2f0, #7ea0c8); margin: 0; height: 18px; }
.menu hr { height: 5px; margin: 0; border: 0; background: linear-gradient(transparent 2px, #b4b4b4 2px, #b4b4b4 3px, transparent 3px); }

.vp-ctl { position: absolute; right: 3px; top: 10px; display: flex; align-items: center; gap: 10px; }
.vmin { width: 11px; height: 3px; background: #eee; }
.cube { position: absolute; left: 1474px; top: 60px; width: 54px; height: 54px; background: #8a8a8a; border: 1px solid #6a6a6a; display: flex; align-items: center; justify-content: center; }
.cube div { width: 34px; height: 34px; background: #7c7c80; color: #5a5a62; font: 700 12px/34px "Liberation Sans", sans-serif; text-align: center; }
.navbar { position: absolute; left: 1529px; top: 146px; width: 32px; height: 197px; background: linear-gradient(#858585, #7a7a7a); border-radius: 5px; border: 1px solid #333; box-shadow: 1px 1px 1px rgba(0,0,0,.3); }
.navbar svg { margin: -1px; }

.doctabs { flex: 1; background: linear-gradient(#f4f4f4, #b0b0b0); border-top: 1px solid #fff; border-bottom: 1px solid #111; display: flex; align-items: flex-end; }
.dbtn { width: 24px; height: 24px; margin-right: 1px; background: linear-gradient(#dcdcdc, #a8a8a8); border: 1px solid #888; display: flex; align-items: center; justify-content: center; }
.dbtn-up { background: linear-gradient(#e8e8e8, #c8c8c8); margin-left: 1px; }
.caret.big-up { border-bottom-width: 6px; border-left-width: 6px; border-right-width: 6px; }
.dtab { height: 26px; width: 103px; background: linear-gradient(#d8d8d8, #b4b4b4); border: 1px solid #777; border-bottom: 0; border-radius: 0 0 5px 5px / 0 0 6px 6px; padding: 0 0 3px 9px; font-size: 14px; color: #1a1a1a; display: flex; align-items: center; gap: 8px; }
.dtab.active { width: 125px; background: #fff; }

/* status bar */
.status { height: 29px; display: flex; align-items: center; background: linear-gradient(#f8f8f8, #c8c8c8); font-size: 14px; color: #1c1c1c; }
.ready { width: 448px; padding-top: 1px; font-size: 14.5px; }
.sticons { display: flex; align-items: center; height: 100%; border-left: 1px solid #c4c4c4; padding-left: 6px; gap: 8px; }
.stcells { margin-left: auto; display: flex; height: 100%; align-items: center; }
.stcells span { border-left: 1px solid #c4c4c4; height: 100%; display: flex; align-items: center; white-space: nowrap; }
.c1 { width: 117px; padding-left: 5px; }
.c2 { width: 165px; padding-left: 5px; }
.c3 { width: 38px; padding-left: 8px; }
```
